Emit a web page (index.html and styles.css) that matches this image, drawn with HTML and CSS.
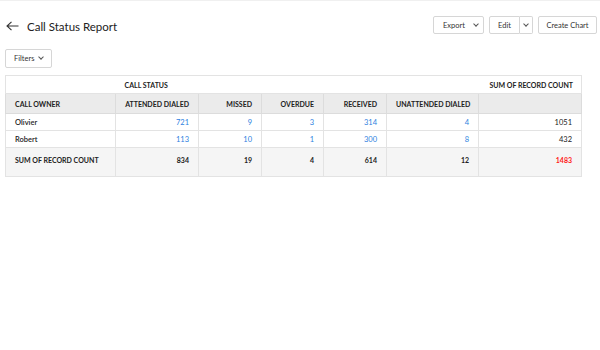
FILE: index.html
```html
<!DOCTYPE html>
<html>
<head>
<meta charset="utf-8">
<link rel="stylesheet" href="styles.css">
</head>
<body>
<div class="page">
  <div class="topbar">
    <div class="title-wrap">
      <svg class="back" width="13" height="10" viewBox="0 0 13 10"><path d="M12.5 5H1M5.5 0.8L1 5l4.5 4.2" fill="none" stroke="#333" stroke-width="1.1"/></svg>
      <span class="title">Call Status Report</span>
    </div>
    <div class="actions">
      <button class="btn btn-export">Export <span class="chev"></span></button>
      <div class="split">
        <button class="btn split-main">Edit</button>
        <button class="btn split-arrow"><span class="chev"></span></button>
      </div>
      <button class="btn btn-chart">Create Chart</button>
    </div>
  </div>
  <div class="toolbar">
    <button class="btn btn-filters">Filters <span class="chev"></span></button>
  </div>
  <table class="report">
    <colgroup>
      <col style="width:110px"><col style="width:83px"><col style="width:63px"><col style="width:62px"><col style="width:63px"><col style="width:92px"><col style="width:103px">
    </colgroup>
    <thead>
      <tr class="h1">
        <th></th>
        <th colspan="5" class="left">CALL STATUS</th>
        <th class="right">SUM OF RECORD COUNT</th>
      </tr>
      <tr class="h2">
        <th class="left">CALL OWNER</th>
        <th>ATTENDED DIALED</th>
        <th>MISSED</th>
        <th>OVERDUE</th>
        <th>RECEIVED</th>
        <th>UNATTENDED DIALED</th>
        <th></th>
      </tr>
    </thead>
    <tbody>
      <tr>
        <td class="left owner">Olivier</td>
        <td class="link">721</td><td class="link">9</td><td class="link">3</td><td class="link">314</td><td class="link">4</td>
        <td>1051</td>
      </tr>
      <tr>
        <td class="left owner">Robert</td>
        <td class="link">113</td><td class="link">10</td><td class="link">1</td><td class="link">300</td><td class="link">8</td>
        <td>432</td>
      </tr>
      <tr class="sum">
        <td class="left">SUM OF RECORD COUNT</td>
        <td>834</td><td>19</td><td>4</td><td>614</td><td>12</td>
        <td class="total">1483</td>
      </tr>
    </tbody>
  </table>
</div>
</body>
</html>
```

FILE: styles.css
```css
* { box-sizing: border-box; }
html, body { margin: 0; padding: 0; background: #fff; }
body {
  font-family: Lato, "Liberation Sans", sans-serif;
  color: #222;
  border-top: 1px solid #f0f0f0;
}
.page { padding: 15px 3px 0 5px; }
.topbar {
  display: flex;
  justify-content: space-between;
  align-items: center;
  height: 18px;
}
.title-wrap { display: flex; align-items: center; padding-top: 2px; }
.back { margin-left: 1px; margin-right: 8px; }
.title { font-size: 11.5px; color: #222; }
.actions { display: flex; gap: 5px; align-items: stretch; height: 18px; }
.btn {
  font-family: inherit;
  font-size: 7.5px;
  color: #333;
  background: #fff;
  border: 1px solid #d6d6d6;
  border-radius: 2px;
  padding: 0 8px;
  height: 100%;
  display: inline-flex;
  align-items: center;
  gap: 6px;
  cursor: pointer;
}
.chev {
  display: inline-block;
  width: 4px; height: 4px;
  border-right: 1px solid #555;
  border-bottom: 1px solid #555;
  transform: rotate(45deg);
  margin-top: -3px;
}
.btn-export { width: 51px; padding: 0 0 0 9px; gap: 9px; }
.split { display: flex; }
.split-main { width: 31px; justify-content: center; border-radius: 2px 0 0 2px; }
.split-arrow { width: 13px; padding: 0; justify-content: center; border-left: none; border-radius: 0 2px 2px 0; }
.btn-chart { width: 59px; justify-content: center; padding: 0; }
.toolbar { margin-top: 15px; height: 19px; display: flex; }
.btn-filters { width: 47px; padding: 0 0 0 8px; gap: 5px; font-size: 7.5px; }
.report {
  margin-top: 7px;
  border-collapse: collapse;
  table-layout: fixed;
  width: 576px;
  border: 1px solid #e3e3e3;
  font-size: 7.5px;
}
.report th, .report td {
  text-align: right;
  padding: 0 9px;
  border: 1px solid #e3e3e3;
  white-space: nowrap;
  overflow: hidden;
}
.report th { font-weight: 700; color: #222; font-size: 7px; }
.report .left { text-align: left; }
.h1 th { height: 18px; border-left: none; border-right: none; background: #fff; }
.h1 th.right { padding-right: 8px; }
.h2 th { height: 20px; background: #ebebeb; border-color: #dcdcdc; }
.report tbody td { height: 17px; color: #222; }
.report td.owner { font-weight: 600; }
.report td.link { color: #2d7fe0; }
.report .sum td {
  height: 29px;
  background: #f5f5f5;
  font-weight: 700;
  vertical-align: top;
  padding-top: 8px;
  font-size: 7px;
}
.report .sum td.total { color: #ff1a1a; }
```
